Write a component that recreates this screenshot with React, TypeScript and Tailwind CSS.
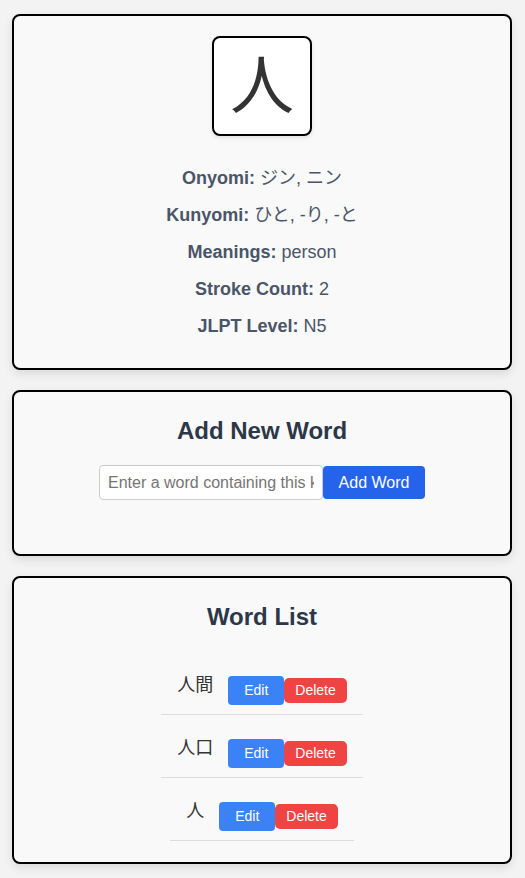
const sans = "font-['Liberation_Sans','Noto_Sans_CJK_JP',sans-serif]";

const info = [
  { label: 'Onyomi:', value: 'ジン, ニン' },
  { label: 'Kunyomi:', value: 'ひと, -り, -と' },
  { label: 'Meanings:', value: 'person' },
  { label: 'Stroke Count:', value: '2' },
  { label: 'JLPT Level:', value: 'N5' },
];

const words = ['人間', '人口', '人'];

function Card({ className, children }: { className: string; children: React.ReactNode }) {
  return (
    <div className={`w-[500px] ml-[12px] rounded-[8px] border-2 border-black bg-[#f9f9f9] shadow-[0_4px_10px_rgba(0,0,0,0.1)] flex flex-col items-center ${className}`}>
      {children}
    </div>
  );
}

export default function App() {
  return (
    <div className={`min-h-[878px] bg-[#f3f3f3] pt-[14px] pb-4 flex flex-col ${sans}`}>
      <Card className="pt-[20px] pb-[28px]">
        <div className="w-[100px] h-[100px] rounded-[8px] border-2 border-black bg-white shadow-[0_2px_4px_rgba(0,0,0,0.1)] flex items-center justify-center">
          <span className="text-[64px] leading-none text-[#333]">人</span>
        </div>
        <div className="mt-[29px] flex flex-col items-center gap-[10px]">
          {info.map((row) => (
            <p key={row.label} className="text-[18px] leading-[27px] text-[#4a5568]">
              <strong className="font-bold">{row.label}</strong> {row.value}
            </p>
          ))}
        </div>
      </Card>

      <Card className="mt-[20px] pt-[25px] pb-[54px]">
        <h2 className="text-[24px] leading-[28px] font-bold text-[#2d3748]">Add New Word</h2>
        <div className="mt-[20px] flex items-center">
          <input
            type="text"
            placeholder="Enter a word containing this kanji"
            className="w-[224px] h-[35px] px-2 text-[16px] bg-white border border-[#ccc] rounded-[4px] placeholder:text-[#757575] outline-none"
          />
          <button type="button" className="w-[102px] h-[33px] bg-[#2563eb] text-white text-[16px] rounded-[4px]">
            Add Word
          </button>
        </div>
      </Card>

      <Card className="mt-[20px] pt-[25px] pb-[21px]">
        <h2 className="text-[24px] leading-[28px] font-bold text-[#2d3748]">Word List</h2>
        <ul className="mt-[21px] flex flex-col items-center">
          {words.map((w) => (
            <li key={w} className="flex items-start px-4 pt-[24px] pb-[9px] border-b border-[#ddd]">
              <span className="mr-[15px] text-[18px] leading-[18px] text-[#333]">{w}</span>
              <button type="button" className="h-[29px] px-4 bg-[#3b82f6] text-white text-[14px] rounded-[4px]">
                Edit
              </button>
              <button type="button" className="mt-[2px] h-[25px] px-[11px] bg-[#ef4444] text-white text-[14px] rounded-[5px]">
                Delete
              </button>
            </li>
          ))}
        </ul>
      </Card>
    </div>
  );
}
